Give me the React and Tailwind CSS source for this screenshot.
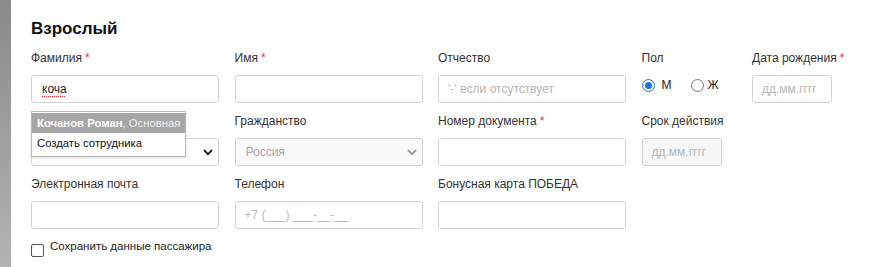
import React from "react";

const F = { fontFamily: '"Liberation Sans", Arial, sans-serif' };

function Label({ children, req }) {
  return (
    <div className="h-[16px] leading-[16px] text-[12px] text-[#333] mb-[9px] whitespace-nowrap">
      {children}
      {req && <span className="text-[#e0313b] ml-[3px]">*</span>}
    </div>
  );
}

function Box({ children, className = "" }) {
  return (
    <div
      className={
        "h-[28px] border border-[#d4d4d4] rounded-[3px] flex items-center px-[9px] text-[12px] " +
        className
      }
    >
      {children}
    </div>
  );
}

function Chevron({ className = "" }) {
  return (
    <svg width="10" height="7" viewBox="0 0 10 7" className={className}>
      <path d="M1 1.2 L5 5.2 L9 1.2" fill="none" stroke="currentColor" strokeWidth="1.8" />
    </svg>
  );
}

export default function App() {
  return (
    <div style={F} className="w-[881px] h-[267px] bg-white flex overflow-hidden">
      <div className="w-[11px] h-full bg-gradient-to-b from-[#8a8a8a] to-[#b3b3b3]" />
      <div className="relative pl-[20px] flex-1">
        <div className="pt-[18px] text-[17px] leading-[21px] font-bold text-[#111] mb-[11px]">
          Взрослый
        </div>
        <div className="grid grid-cols-[188px_188px_188px_95px_80px] gap-x-[15.5px] gap-y-[10px]">
          {/* Row 1 */}
          <div>
            <Label req>Фамилия</Label>
            <Box>
              <span className="pl-[1px] text-[#222] underline decoration-dotted decoration-[#e0313b] underline-offset-[3px]">
                коча
              </span>
            </Box>
          </div>
          <div>
            <Label req>Имя</Label>
            <Box />
          </div>
          <div>
            <Label>Отчество</Label>
            <Box className="text-[#b5b5b5] text-[11.5px]">'-' если отсутствует</Box>
          </div>
          <div>
            <Label>Пол</Label>
            <div className="h-[28px] flex items-center text-[12px] text-[#222] -mt-[4px]">
              <span className="w-[13px] h-[13px] rounded-full border-[1.5px] border-[#1a73e8] flex items-center justify-center">
                <span className="w-[7px] h-[7px] rounded-full bg-[#1a73e8]" />
              </span>
              <span className="ml-[7px]">М</span>
              <span className="ml-[19px] w-[13px] h-[13px] rounded-full border border-[#777]" />
              <span className="ml-[4px]">Ж</span>
            </div>
          </div>
          <div>
            <Label req>Дата рождения</Label>
            <Box className="text-[#b8b8b8] text-[11px]">дд.мм.гггг</Box>
          </div>

          {/* Row 2 */}
          <div>
            <Label>&nbsp;</Label>
            <Box className="justify-end pr-[5px] text-[#111]">
              <Chevron />
            </Box>
          </div>
          <div>
            <Label>Гражданство</Label>
            <Box className="justify-between text-[#a8a8a8] bg-[#fafafa] pr-[5px]">
              <span className="pl-[1px]">Россия</span>
              <Chevron className="text-[#999]" />
            </Box>
          </div>
          <div>
            <Label req>Номер документа</Label>
            <Box />
          </div>
          <div className="col-span-2">
            <Label>Срок действия</Label>
            <Box className="w-[80px] text-[#b8b8b8] text-[11px] bg-[#f7f7f7]">дд.мм.гггг</Box>
          </div>

          {/* Row 3 */}
          <div>
            <Label>Электронная почта</Label>
            <Box />
          </div>
          <div>
            <Label>Телефон</Label>
            <Box className="text-[#b8b8b8] text-[11px]">+7 (___) ___-__-__</Box>
          </div>
          <div>
            <Label>Бонусная карта ПОБЕДА</Label>
            <Box />
          </div>
        </div>

        <div className="flex items-start mt-[15px]">
          <span className="w-[13px] h-[13px] rounded-[2px] border border-[#555]" />
          <span className="ml-[6px] -mt-[6px] text-[11.5px] leading-[16px] text-[#222]">
            Сохранить данные пассажира
          </span>
        </div>

        {/* Autocomplete dropdown */}
        <div className="absolute left-[20px] top-[111px] w-[155px] bg-white border border-[#b8b8b8] shadow-[0_1px_2px_rgba(0,0,0,0.15)] pt-[1px] text-[11.3px]">
          <div className="h-[20px] leading-[20px] bg-[#a6a6a6] px-[5px] whitespace-nowrap text-white">
            <span className="font-bold">Кочанов Роман</span>
            <span className="text-[#eee]">, Основная</span>
          </div>
          <div className="h-[23px] leading-[20px] px-[5px] text-[#111] whitespace-nowrap">
            Создать сотрудника
          </div>
        </div>
      </div>
    </div>
  );
}
